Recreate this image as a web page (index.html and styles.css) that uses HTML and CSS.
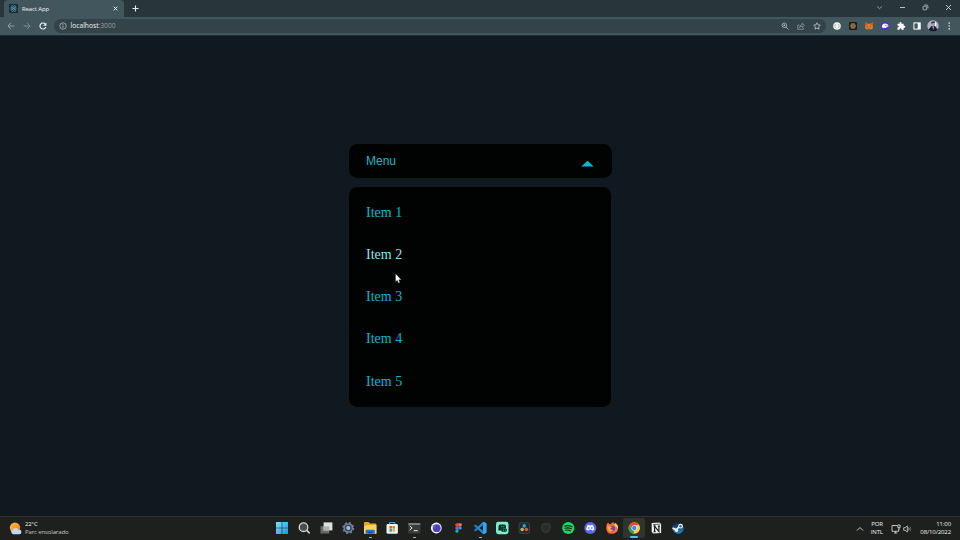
FILE: index.html
```html
<!DOCTYPE html>
<html lang="pt">
<head>
<meta charset="utf-8">
<title>React App</title>
<link rel="stylesheet" href="styles.css">
</head>
<body>
<header class="tabs">
  <div class="tab">
    <svg class="favicon" width="9" height="9" viewBox="0 0 18 18"><rect width="18" height="18" rx="2" fill="#1d292e"/><g fill="none" stroke="#4b94a9" stroke-width="1.2"><ellipse cx="9" cy="9" rx="7" ry="2.7"/><ellipse cx="9" cy="9" rx="7" ry="2.7" transform="rotate(60 9 9)"/><ellipse cx="9" cy="9" rx="7" ry="2.7" transform="rotate(120 9 9)"/></g><circle cx="9" cy="9" r="1.5" fill="#4b94a9"/></svg>
    <span class="tab-title">React App</span>
    <svg class="tab-close" width="5" height="5" viewBox="0 0 5 5"><path d="M.7.7l3.6 3.6M4.3.7L.7 4.3" stroke="#e8edef" stroke-width="1"/></svg>
  </div>
  <svg class="new-tab" width="7" height="7" viewBox="0 0 7 7"><path d="M3.5.5v6M.5 3.5h6" stroke="#e8eced" stroke-width="1.1"/></svg>
  <div class="window-controls">
    <svg width="7" height="7" viewBox="0 0 7 7"><path d="M1 2.3l2.5 2.4L6 2.3" fill="none" stroke="#a3adb0" stroke-width=".8"/></svg>
    <svg width="7" height="7" viewBox="0 0 7 7"><path d="M1 3.5h5" stroke="#cad0d2" stroke-width=".9"/></svg>
    <svg width="7" height="7" viewBox="0 0 7 7"><g fill="none" stroke="#bec6c9" stroke-width=".8"><rect x="1" y="2.2" width="3.7" height="3.7" rx=".8"/><path d="M2.4 1h2.2q1.3 0 1.3 1.3v2.2"/></g></svg>
    <svg width="7" height="7" viewBox="0 0 7 7"><path d="M1 1l5 5M6 1L1 6" stroke="#d5dbdd" stroke-width=".9"/></svg>
  </div>
</header>
<nav class="toolbar">
  <div class="nav-buttons">
    <svg width="8" height="8" viewBox="0 0 8 8"><path d="M7.4 4H1M4 .9L.9 4 4 7.1" fill="none" stroke="#a5b1b5" stroke-width=".8"/></svg>
    <svg width="8" height="8" viewBox="0 0 8 8"><path d="M.6 4H7M4 .9L7.1 4 4 7.1" fill="none" stroke="#8c9ca1" stroke-width=".8"/></svg>
    <svg width="8" height="8" viewBox="0 0 8 8"><path d="M6.8 5A3 3 0 1 1 6.2 2" fill="none" stroke="#f1f4f5" stroke-width="1.1"/><path d="M7.4.5v3.2H4.2z" fill="#f1f4f5"/></svg>
  </div>
  <div class="address">
    <svg width="8" height="8" viewBox="0 0 8 8"><circle cx="4" cy="4" r="3.2" fill="none" stroke="#b7c0c3" stroke-width=".75"/><path d="M4 3.6v2.1M4 2.1v.8" stroke="#c7ced1" stroke-width=".8"/></svg>
    <span class="url">localhost<span class="port">:3000</span></span>
    <div class="address-actions">
      <svg width="8" height="8" viewBox="0 0 8 8"><circle cx="3.3" cy="3.3" r="2.3" fill="none" stroke="#b7c1c5" stroke-width=".8"/><path d="M5 5l2.5 2.5M2.3 3.3h2M3.3 2.3v2" stroke="#b7c1c5" stroke-width=".8"/></svg>
      <svg width="8" height="8" viewBox="0 0 8 8"><path d="M2.3 3H.8v4.3h5.5V5.8M2.5 5.5Q2.8 2.8 5.2 2.8V1.2l2.2 2.2-2.2 2V4Q3.6 4 2.5 5.5z" fill="none" stroke="#96a4a9" stroke-width=".7"/></svg>
      <svg width="8" height="8" viewBox="0 0 8 8"><path d="M4 .8l1 2.1 2.3.3-1.7 1.6.4 2.4L4 6 2 7.2l.4-2.4L.7 3.2 3 2.9z" fill="none" stroke="#c4ccce" stroke-width=".8"/></svg>
    </div>
  </div>
  <div class="extensions">
    <svg viewBox="0 0 10 10"><circle cx="5" cy="5" r="3.8" fill="#f2f2ed"/><path d="M4 3.2q-1.4.2-1.1 1.8Q2.7 6.6 4 6.8M6 3.2q1.4.2 1.1 1.8.2 1.6-1.1 1.8" fill="none" stroke="#a9aaa6" stroke-width=".7"/></svg>
    <svg viewBox="0 0 10 10"><rect x="1" y="1" width="8" height="8" rx="1.3" fill="#171b1b"/><g fill="none" stroke="#b58640" stroke-width=".7"><ellipse cx="5" cy="5" rx="2.9" ry="1.1"/><ellipse cx="5" cy="5" rx="2.9" ry="1.1" transform="rotate(60 5 5)"/><ellipse cx="5" cy="5" rx="2.9" ry="1.1" transform="rotate(120 5 5)"/></g></svg>
    <svg viewBox="0 0 10 10"><path d="M1 1.2l2.8 1.5h2.4L9 1.2l-.4 3L9 6.5 8 8.6 6.2 8l-.6.7H4.4L3.8 8 2 8.6 1 6.5l.4-2.3z" fill="#e57d24"/><path d="M2.7 5l1.5.7-.7.6zm4.6 0l-1.5.7.7.6zM4.2 7.5h1.6l-.3.7h-1z" fill="#543422"/><path d="M1 1.2l2.8 1.5-1 1.6-1.4-.1zM9 1.2L6.2 2.7l1 1.6 1.4-.1z" fill="#c4591e"/></svg>
    <svg viewBox="0 0 10 10"><circle cx="5" cy="5" r="4.1" fill="#4c32cf"/><path d="M1.9 6Q1.8 2.5 5 2.5q3.2 0 3.5 2.7-.7 1-1.6.5-.7 2.2-2.2 1Q3 7.9 1.9 6z" fill="#f2efff"/><path d="M5.7 4v.9M6.9 4v.9" stroke="#4c32cf" stroke-width=".6"/></svg>
    <svg viewBox="0 0 10 10"><path d="M1.5 2.8h2q-.4-1.9 1-1.9t1 1.9h2.2v2q1.6-.3 1.6 1t-1.6 1v1.9H5.5q0-1.4-1-1.4t-1 1.4h-2V6.6q1.4 0 1.4-1t-1.4-1z" fill="#fff"/></svg>
    <svg viewBox="0 0 10 10"><rect x="1.9" y="1.9" width="6.3" height="6.2" fill="none" stroke="#fff" stroke-width="1"/><path d="M5.7 2h2.5v6H5.7z" fill="#fff"/></svg>
    <svg viewBox="0 0 12 12"><circle cx="6" cy="6" r="5.7" fill="#a9b7c7"/><path d="M1.5 9.5L4.5 6h3.2l3 3.5A5.7 5.7 0 0 1 1.5 9.5z" fill="#171c2d"/><ellipse cx="6.2" cy="4.3" rx="1.7" ry="2.2" fill="#bc958b"/><path d="M4.1 3.8Q4 1.2 6.3 1.2T8.2 3.3L7 2.8z" fill="#343543"/><path d="M5.5 6.4h1.3L6.2 10z" fill="#e8ebee"/><path d="M8.6 2v4" stroke="#eef1f6" stroke-width="1.2"/></svg>
    <svg viewBox="0 0 10 10"><g fill="#e6eaeb"><circle cx="5.2" cy="2.1" r=".8"/><circle cx="5.2" cy="5" r=".8"/><circle cx="5.2" cy="7.9" r=".8"/></g></svg>
  </div>
</nav>
<main class="page">
  <div class="dropdown">
    <button class="trigger"><span>Menu</span><svg width="13" height="7" viewBox="0 0 13 7"><path d="M.3 6.6L6.5.7l6.2 5.9z" fill="#00b8d4"/></svg></button>
    <ul class="menu"><li>Item 1</li><li class="hovered">Item 2</li><li>Item 3</li><li>Item 4</li><li>Item 5</li></ul>
    <svg class="cursor" width="7" height="11" viewBox="0 0 7 11"><path d="M.6.7v8.1l1.7-1.6L3.4 10l1.4-.6-1.1-2.6h2.5z" fill="#fff" stroke="#444" stroke-width=".3"/></svg>
  </div>
</main>
<footer class="taskbar">
  <div class="weather">
    <svg width="13" height="13" viewBox="0 0 13 13"><defs><linearGradient id="sun" x2="1" y2="1"><stop stop-color="#ffc13a"/><stop offset="1" stop-color="#ef7816"/></linearGradient></defs><circle cx="6" cy="5.7" r="5.2" fill="url(#sun)"/><path d="M4.1 12.2a2.4 2.4 0 0 1 0-4.7Q5.2 5.4 7.3 6.1q1.5.4 1.9 1.6h1a2.2 2.2 0 0 1 0 4.5z" fill="#c2d8f2"/></svg>
    <div class="weather-text"><span>22°C</span><span class="condition">Parc ensolarado</span></div>
  </div>
  <div class="apps">
    <div class="app"><svg viewBox="0 0 16 16"><defs><linearGradient id="win" x2="1" y2="1"><stop stop-color="#83dcfb"/><stop offset="1" stop-color="#1497e8"/></linearGradient></defs><path d="M2 2h5.7v5.7H2zM8.3 2H14v5.7H8.3zM2 8.3h5.7V14H2zM8.3 8.3H14V14H8.3z" fill="url(#win)"/></svg></div>
    <div class="app"><svg viewBox="0 0 16 16"><circle cx="7.5" cy="7.2" r="4.3" fill="#4b4e4e" stroke="#d3d6d5" stroke-width="1.3"/><path d="M10.7 10.4l3 3" stroke="#d3d6d5" stroke-width="1.5"/></svg></div>
    <div class="app"><svg viewBox="0 0 16 16"><path d="M2.5 6.2h8.8v7.3H2.5z" fill="#686a68"/><path d="M5.6 2.4h8.8v8H5.6z" fill="#e0e1df"/><path d="M5.6 6.2h5.7v4.2H5.6z" fill="#b0b2b0"/></svg></div>
    <div class="app"><svg viewBox="0 0 16 16"><circle cx="8.3" cy="8" r="4.8" fill="#828d98"/><circle cx="8.3" cy="8" r="5.1" fill="none" stroke="#75808a" stroke-width="1.7" stroke-dasharray="2 2"/><circle cx="8.3" cy="8" r="3.5" fill="#294965"/><circle cx="8.3" cy="8" r="2" fill="#9fc7e4"/></svg></div>
    <div class="app running"><svg viewBox="0 0 16 16"><path d="M2 3q0-.9.9-.9h3.7L8 3.6h5.4q1 0 1 .9v9H2z" fill="#e9a622"/><path d="M2 6l5.2-1h7.2v8.7H2z" fill="#ffd257"/><path d="M3.6 13.7v-3q0-1 1-1h7.2q1 0 1 1v3z" fill="#1678c6"/><path d="M5.9 12h4.6v1.2H5.9z" fill="#0d528c"/></svg></div>
    <div class="app"><svg viewBox="0 0 16 16"><path d="M5.5 5V2.5h5.4V5" fill="none" stroke="#4aa9df"/><rect x="2.5" y="4" width="11.4" height="9.8" rx="1.4" fill="#edf0ef"/><path fill="#e64c32" d="M5.5 6.1h2.4v2.5H5.5z"/><path fill="#66a829" d="M8.5 6.1h2.4v2.5H8.5z"/><path fill="#1694dc" d="M5.5 9.1h2.4v2.5H5.5z"/><path fill="#e9ad22" d="M8.5 9.1h2.4v2.5H8.5z"/></svg></div>
    <div class="app running"><svg viewBox="0 0 16 16"><rect x="2.2" y="3" width="12.2" height="10.5" rx="1" fill="#373c3d"/><path d="M2.2 4q0-1 1-1h10.2q1 0 1 1v1H2.2z" fill="#7b7e7e"/><path d="M3.7 5.9l2.4 2-2.4 2.2M7.7 10.7h4" fill="none" stroke="#eee" stroke-width="1"/></svg></div>
    <div class="app"><svg viewBox="0 0 16 16"><circle cx="8.3" cy="8" r="5.4" fill="#f4f3f8"/><circle cx="8.7" cy="8.2" r="3.9" fill="#4a43b6"/><path d="M4.5 5.2l3.7.2-1.2 2-2 .1z" fill="#6860ca"/></svg></div>
    <div class="app"><svg viewBox="0 0 16 16"><path d="M8.5 3.2H6.8a1.6 1.6 0 0 0 0 3.2h1.7z" fill="#ed4c2b"/><path d="M8.5 3.2h1.8a1.6 1.6 0 0 1 0 3.2H8.5z" fill="#ff7262"/><path d="M8.5 6.4H6.8a1.6 1.6 0 0 0 0 3.2h1.7z" fill="#9857ee"/><circle cx="10.1" cy="8" r="1.6" fill="#19acec"/><path d="M8.5 9.6H6.8a1.6 1.6 0 1 0 1.7 1.6z" fill="#0bc47c"/></svg></div>
    <div class="app running"><svg viewBox="0 0 16 16"><path d="M11.2 1.8l3.2 1.4v9.6l-3.2 1.4L2 5.8l1.3-1.3L11.2 11V5L3.3 11.5 2 10.2z" fill="#2389d0"/><path d="M11.2 1.8l3.2 1.4v9.6l-3.2 1.4z" fill="#38a7ef"/></svg></div>
    <div class="app"><svg viewBox="0 0 16 16"><rect x="2" y="1.8" width="12.5" height="12.4" rx="2.4" fill="#7aefce"/><path d="M4.5 6.2q0-1.7 1.7-1.7h4q1.8 0 1.8 1.8v2.1H9q-1.9 0-1.9 2H4.3z" fill="#102e28"/><rect x="7.3" y="8.5" width="5.5" height="3.2" rx="1" fill="#102e28"/><path d="M7.7 6.2v1M9.8 6.2v1M9 10.2h.8M11 10.2h.8" stroke="#7aefce" stroke-width=".8"/></svg></div>
    <div class="app"><svg viewBox="0 0 16 16"><rect x="3" y="2.8" width="10.6" height="10.6" rx="2" fill="#20292e" stroke="#56606b" stroke-width=".5"/><circle cx="8.3" cy="5.9" r="1.8" fill="#28a4cb"/><circle cx="6.2" cy="9.5" r="1.8" fill="#b9bd45"/><circle cx="10.4" cy="9.5" r="1.8" fill="#df5140"/></svg></div>
    <div class="app"><svg viewBox="0 0 16 16"><path d="M4 3.5l4-1 4.2 1 1 4-2 4.4-3 1.7-3.8-1.7-1.8-4.2z" fill="#303234"/><path d="M5 6h6M5 8h6M6 10h4" stroke="#232627"/></svg></div>
    <div class="app"><svg viewBox="0 0 16 16"><circle cx="8.3" cy="8" r="6.1" fill="#21d565"/><path d="M4.7 6.1q3.9-1.2 7.4.7M5 8.2q3.4-.9 6.4.6M5.3 10.2q2.8-.7 5.2.5" fill="none" stroke="#17271c" stroke-width="1.1" stroke-linecap="round"/></svg></div>
    <div class="app"><svg viewBox="0 0 16 16"><circle cx="8.3" cy="8" r="6" fill="#5968ee"/><path d="M5.5 5.2l1.8-.5.4.7h1.2l.4-.7 1.8.5q1.4 2.6 1.2 4.6l-2 1-.7-1H7l-.7 1-2-1q-.2-2.2 1.2-4.6z" fill="#f4f5ff"/><circle cx="6.8" cy="8" r=".8" fill="#5968ee"/><circle cx="9.8" cy="8" r=".8" fill="#5968ee"/></svg></div>
    <div class="app"><svg viewBox="0 0 16 16"><path d="M3 4l1-1.6 1.4 1.8 2-.4Q7.6 2.5 9.4 1.9q0 1.4 1.6 2.2l.3-1q3.1 2.5 2.7 5.5-.5 4.7-5.5 5.2Q2.9 13.9 2.3 8.7 2 6 3 4z" fill="#ff7139"/><path d="M9.4 1.9q0 1.4 1.8 2.4l.3-1.2q3.1 2.7 2.5 6-1-2.5-3.1-2.9z" fill="#ffd540"/><path d="M2.8 10.8q2.4 4.4 7.6 2.5-6.6 2.2-7.6-2.5z" fill="#f32554"/><circle cx="8.2" cy="8.5" r="3" fill="#7545b3"/><path d="M3.3 6.4l3.3-.2 1.8 1.2-2 .7q.3 2.4 3.3 1.7-2.6 3-5.2.4z" fill="#ffac29"/></svg></div>
    <div class="app active"><svg viewBox="0 0 16 16"><circle cx="8.3" cy="8" r="5.7" fill="#ffcd40"/><path d="M3.4 5.1a5.7 5.7 0 0 1 9.8 0L8.3 5.3 5.7 9.4z" fill="#e94639"/><path d="M3.4 5.1l2.4 4.3 2.5 1.4-.9 2.8a5.7 5.7 0 0 1-4-8.5z" fill="#24a35a"/><circle cx="8.3" cy="8" r="2.8" fill="#f7f7f7"/><circle cx="8.3" cy="8" r="2.2" fill="#3d87ef"/></svg></div>
    <div class="app"><svg viewBox="0 0 16 16"><path d="M3.7 3.1l7.8-.5L13.1 4v9l-8 .6-1.4-1.8z" fill="#f0f0ee"/><path d="M5 4.6l7.3-.5" stroke="#252725" stroke-width=".7"/><path d="M6.6 11.6V6.1l4.3 5.4V6.1M5.6 6.1h2M9.9 6.1h2M5.6 11.6h2" fill="none" stroke="#191b19" stroke-width="1.2"/></svg></div>
    <div class="app"><svg viewBox="0 0 16 16"><defs><linearGradient id="steam" x2="0" y2="1"><stop stop-color="#122142"/><stop offset="1" stop-color="#238cca"/></linearGradient></defs><circle cx="8.2" cy="8" r="5.8" fill="url(#steam)"/><path d="M2.5 8.1l4 1.7 3.4-4.2" fill="none" stroke="#edf3f8" stroke-width="1.7"/><circle cx="10.5" cy="6.2" r="2.4" fill="#edf3f8"/><circle cx="10.5" cy="6.2" r="1.2" fill="#37669c"/><circle cx="6.5" cy="10.3" r="1.7" fill="#edf3f8"/></svg></div>
  </div>
  <div class="tray">
    <svg class="chevron" width="8" height="6" viewBox="0 0 8 6"><path d="M1 4.5l3-3 3 3" fill="none" stroke="#dedfdd" stroke-width=".9"/></svg>
    <div class="language"><span>POR</span><span>INTL</span></div>
    <svg class="network" width="10" height="10" viewBox="0 0 10 10"><path d="M6 1.5H1v5.8h6.7V5M3 9h3.3M4.6 7.3V9" fill="none" stroke="#d3d5d2" stroke-width=".9"/><path d="M6.8 1h2.3v2.7H6.8zM8 3.7v2" fill="none" stroke="#d3d5d2" stroke-width=".9"/></svg>
    <svg class="volume" width="9" height="8" viewBox="0 0 9 8"><path d="M.7 2.7h1.5L4.3.9v6.2L2.2 5.3H.7zM5.6 2.5q1.1 1.5 0 3" fill="none" stroke="#d3d5d2" stroke-width=".8"/><path d="M7 1.4q2 2.6 0 5.2" fill="none" stroke="#6b6d69" stroke-width=".7"/></svg>
    <div class="clock"><span>11:00</span><span>08/10/2022</span></div>
  </div>
</footer>
</body>
</html>
```
FILE: styles.css
```css
* { box-sizing: border-box; }
body {
  margin: 0;
  width: 960px;
  height: 540px;
  display: grid;
  grid-template-rows: 17px 19px 480px 24px;
  overflow: hidden;
  background: #101920;
  font-family: "Open Sans", "Noto Sans", sans-serif;
}
svg { display: block; flex-shrink: 0; }
.tabs { display: flex; align-items: center; background: #28363b; padding-left: 4px; }
.tab {
  display: flex;
  align-items: center;
  width: 120px;
  height: 17px;
  padding: 0 6px 0 5px;
  background: #42565d;
  border-radius: 4px 4px 0 0;
}
.tab-title { margin-left: 4px; font-size: 5.9px; line-height: 8px; letter-spacing: -.05px; color: #f0f4f5; }
.tab-close { margin-left: auto; }
.new-tab { margin-left: 7.5px; }
.window-controls { display: flex; gap: 16px; margin-left: auto; padding: 0 8px 3px 0; }
.toolbar {
  display: flex;
  align-items: center;
  padding: 0 5px 0 7px;
  background: #42565d;
  border-bottom: 1px solid #202c33;
}
.nav-buttons { display: flex; gap: 8px; }
.address {
  display: flex;
  align-items: center;
  width: 772px;
  height: 14px;
  margin-left: 7px;
  padding: 0 5px;
  border-radius: 7px;
  background: #334348;
}
.url { margin-left: 3.5px; color: #eef2f3; font-size: 6.7px; line-height: 10px; }
.port { color: #91a0a6; }
.address-actions { display: flex; gap: 8px; margin-left: auto; }
.extensions { display: flex; align-items: center; gap: 6px; margin-left: 6px; }
.extensions svg { width: 10px; height: 10px; }
.extensions svg:nth-child(7) { width: 12px; height: 12px; margin: 0 -1px; }
.page { display: flex; justify-content: center; padding-top: 108.3px; }
.dropdown { position: relative; width: 262px; }
.trigger {
  display: flex;
  width: 262.5px;
  height: 33.7px;
  align-items: center;
  justify-content: space-between;
  padding: 0 18px 0 17px;
  border: 0;
  border-radius: 8.5px;
  background: #000302;
  color: #25b3c9;
  font: 12px/16px "Liberation Sans", Arial, sans-serif;
}
.trigger svg { margin-top: 5px; }
.menu {
  margin: 9px 0 0;
  padding: 4.6px 17px;
  height: 219.8px;
  list-style: none;
  border-radius: 8.5px;
  background: #000302;
  color: #00b8d2;
  font: 14px/42.3px "Liberation Serif", "Times New Roman", serif;
}
.menu li { height: 42.3px; }
.menu .hovered { color: #8ee4eb; }
.cursor { position: absolute; left: 46px; top: 129px; }
.taskbar {
  display: grid;
  grid-template-columns: 271px 418px 271px;
  background: #1e201e;
  border-top: 1px solid #303331;
  color: #f2f3f1;
  font-size: 6px;
  line-height: 8px;
  letter-spacing: -.12px;
}
.weather { display: flex; align-items: center; padding-left: 9px; }
.weather-text { display: flex; flex-direction: column; margin: -2px 0 0 3px; }
.condition { color: #c5c7c4; }
.apps { display: flex; }
.app {
  position: relative;
  display: flex;
  width: 22px;
  height: 23px;
  align-items: center;
  justify-content: center;
}
.app svg { width: 16px; height: 16px; margin-top: -1px; }
.running::after, .active::after {
  content: "";
  position: absolute;
  bottom: 2px;
  left: 9.5px;
  width: 3px;
  height: 1px;
  background: #a9aba8;
}
.active { height: 20px; margin-top: 1px; border-radius: 2px; background: #303330; }
.active::after { bottom: 0; left: 7px; width: 8px; height: 2px; border-radius: 1px; background: #59b9ec; }
.tray { display: flex; align-items: center; justify-content: flex-end; padding-right: 9px; text-align: right; }
.language, .clock { display: flex; flex-direction: column; margin-top: -1px; }
.language { margin-left: 7px; }
.network { margin-left: 8px; }
.volume { margin-left: 2px; }
.clock { margin-left: 8.5px; }
```
